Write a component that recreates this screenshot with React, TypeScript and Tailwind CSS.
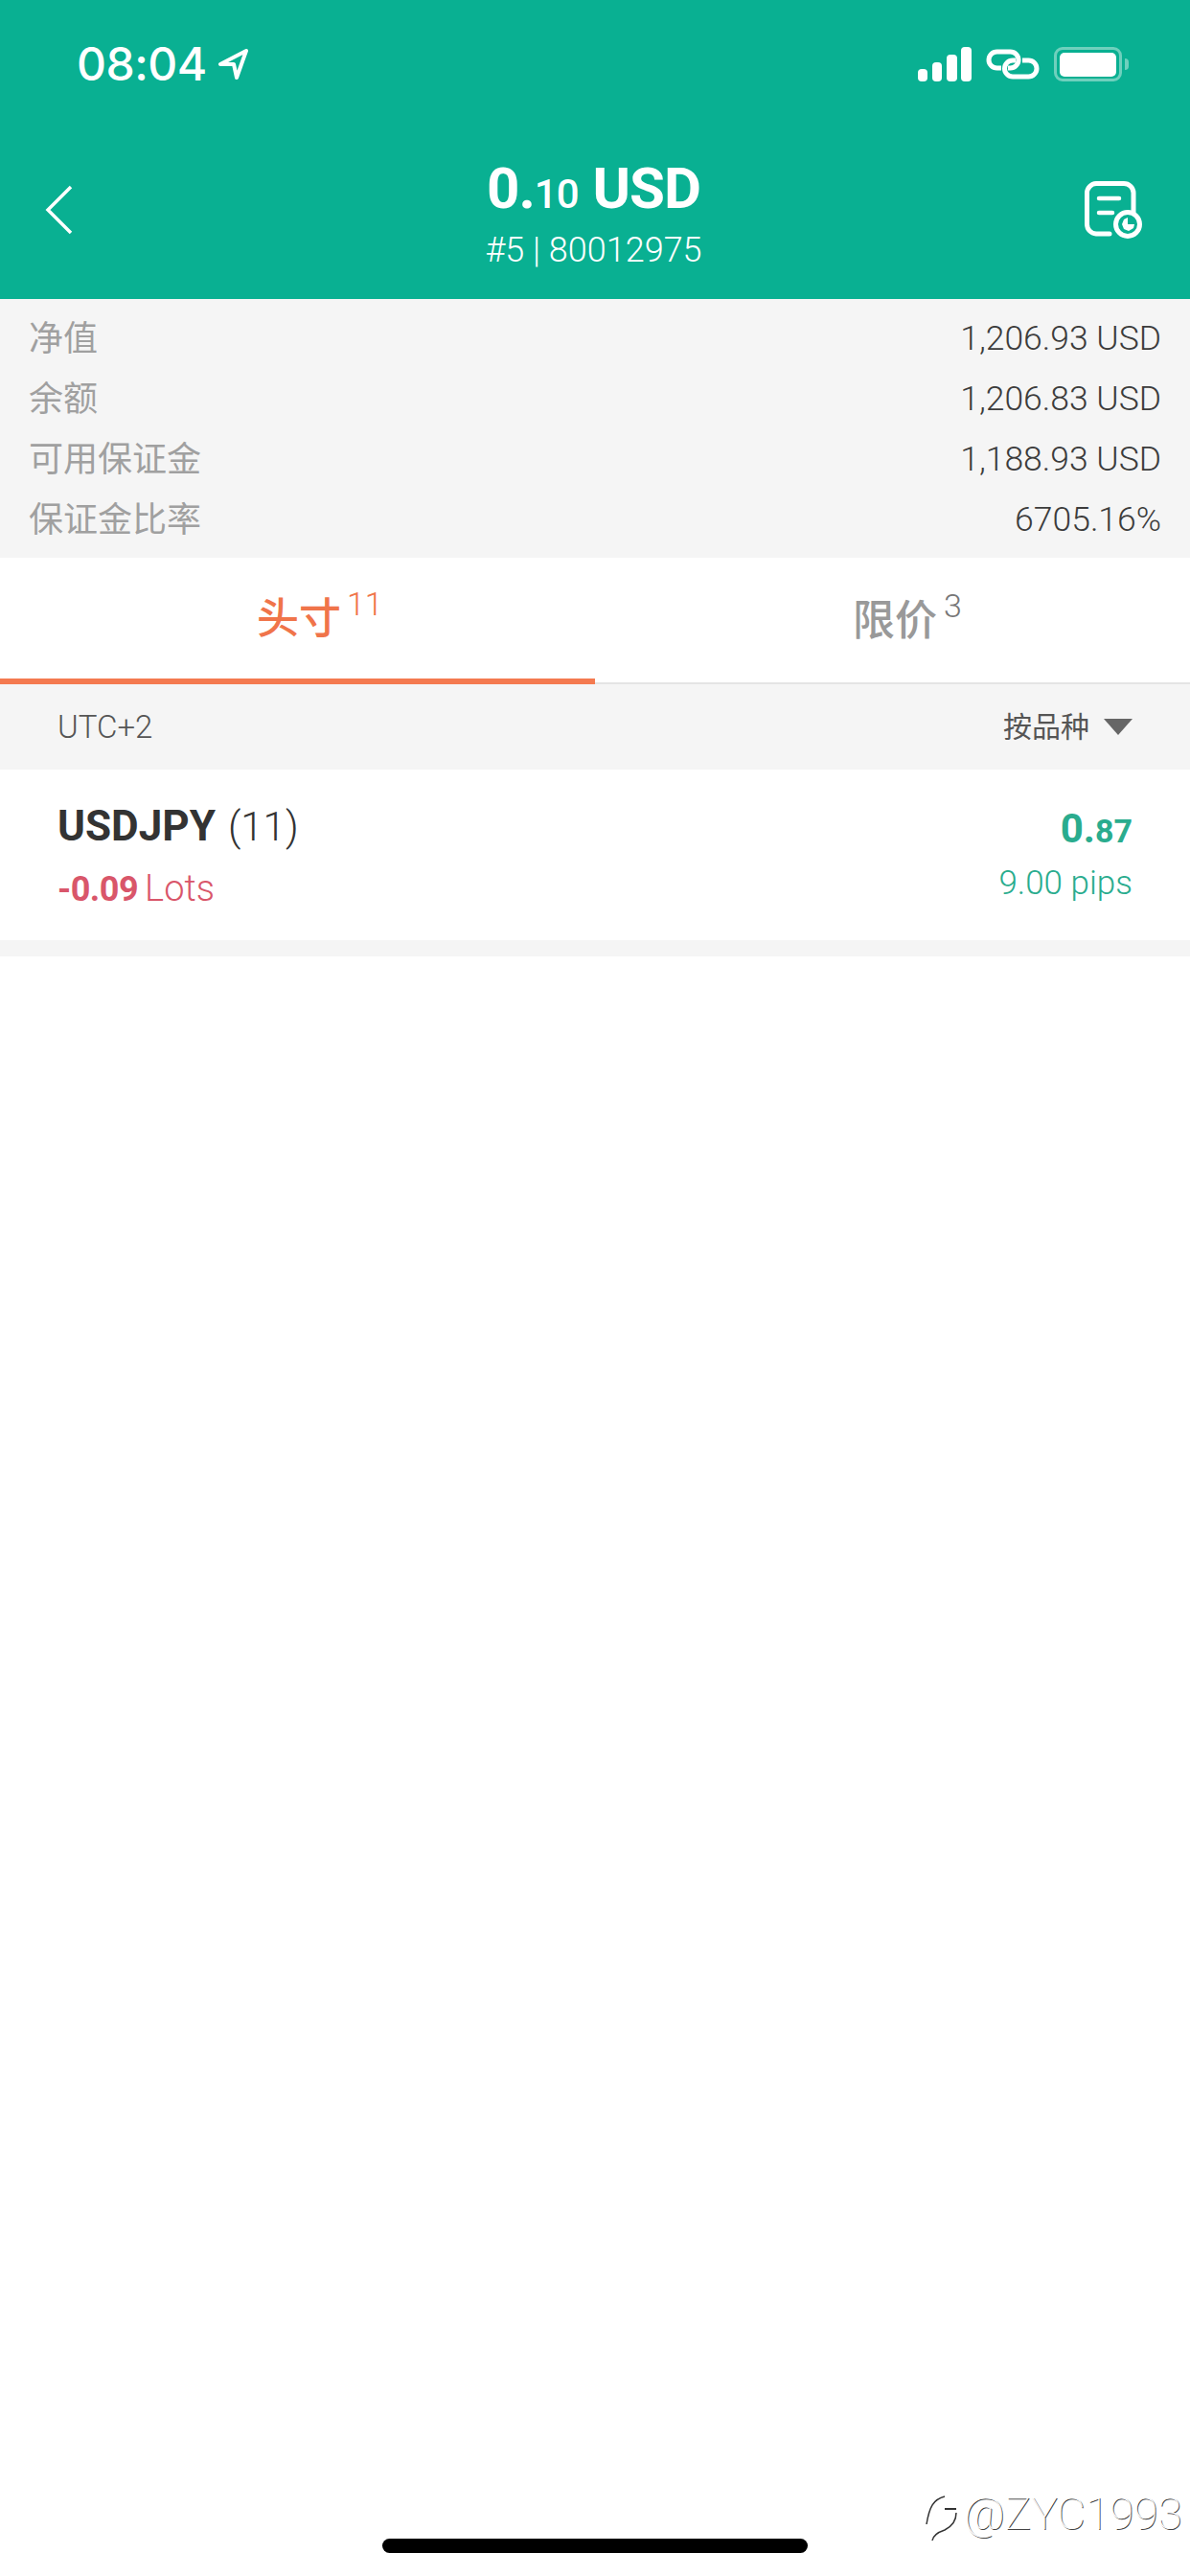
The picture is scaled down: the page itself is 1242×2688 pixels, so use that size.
const din = "font-['Roboto','Noto_Sans_CJK_SC',sans-serif]";

const StatusIcons = () => (
  <div className="flex items-center">
    <svg width="56" height="36" viewBox="0 0 56 36" fill="#fff">
      <rect x="0" y="23" width="10" height="13" rx="4" />
      <rect x="15" y="16" width="10" height="20" rx="4" />
      <rect x="30" y="8" width="11" height="28" rx="4" />
      <rect x="45" y="0" width="11" height="36" rx="4" />
    </svg>
    <svg className="ml-[15px]" width="56" height="32" viewBox="0 0 56 32" fill="none" stroke="#fff" strokeWidth="5">
      <path d="M16 20H11.500A8.500 8.500 0 0 1 11.500 3H25.500A8.500 8.500 0 0 1 25.500 20H23" />
      <path d="M38 12H44.500A8.500 8.500 0 0 1 44.500 29H28A8.500 8.500 0 0 1 28 12H31" />
    </svg>
    <div className="ml-[15px] flex items-center">
      <div className="flex h-[36px] w-[71px] items-center justify-center rounded-[9px] border-[3px] border-[#6fd0bd]">
        <div className="h-[25px] w-[59px] rounded-[5px] bg-white" />
      </div>
      <div className="ml-[3px] h-[12px] w-[4px] rounded-r-full bg-[#6fd0bd]" />
    </div>
  </div>
);

const HistoryIcon = () => (
  <svg className="mb-[6px]" width="60" height="60" viewBox="0 0 60 60" fill="none" stroke="#fff" strokeWidth="5" strokeLinecap="round">
    <path d="M26 55H12A10 10 0 0 1 2.500 45V12A10 10 0 0 1 12 2.500H41A10 10 0 0 1 51 12V32" />
    <path d="M15 18H36M15 33H29" strokeWidth="4.500" />
    <circle cx="45" cy="45" r="12.500" />
    <path d="M45 38V45H52L51 49 46 52 41 50 39 45 41 40Z" fill="#fff" stroke="none" />
  </svg>
);

const rows = [
  ["净值", "1,206.93 USD"],
  ["余额", "1,206.83 USD"],
  ["可用保证金", "1,188.93 USD"],
  ["保证金比率", "6705.16%"],
];

export default function App() {
  return (
    <div className={`relative flex min-h-[2688px] w-[1242px] flex-col bg-white ${din}`}>
      <header className="flex h-[312px] flex-col bg-[#09b092] text-white">
        <div className="flex items-center justify-between pl-[80px] pr-[64px] pt-[49px]">
          <div className="flex items-center">
            <span className="font-['Inter',sans-serif] text-[48px] leading-[36px] font-medium tracking-[-0.5px]">08:04</span>
            <svg className="ml-[11px]" width="33" height="34" viewBox="0 0 33 34" fill="none" stroke="#fff" strokeWidth="4" strokeLinejoin="round">
              <path d="M30 3 3 17H17L20 31Z" />
            </svg>
          </div>
          <StatusIcons />
        </div>
        <div className="mt-[77px] flex items-center justify-between pl-[47px] pr-[50px]">
          <div className="mb-[6px] w-[60px]">
            <svg width="30" height="52" viewBox="0 0 30 52" fill="none" stroke="#fff" strokeWidth="3.500">
              <path d="M27 2 3 26 27 50" />
            </svg>
          </div>
          <div className="flex flex-col items-center">
            <div className="flex items-baseline text-[60px] leading-[70px] font-bold tracking-[-1px]">
              0.<span className="text-[42px] font-medium">10</span>
              <span className="ml-[15px]">USD</span>
            </div>
            <div className="mt-[2px] text-[36px] leading-[42px] font-light">#5 | 80012975</div>
          </div>
          <HistoryIcon />
        </div>
      </header>

      <section className="flex h-[270px] flex-col justify-center bg-[#f5f5f5] pl-[30px] pr-[30px] pt-[3px]">
        {rows.map(([label, value]) => (
          <div key={label} className="flex h-[63px] items-center justify-between">
            <span className="text-[36px] text-[#a0a0a0]">{label}</span>
            <span className="text-[35.5px] font-light text-[#3c3c3c]">{value}</span>
          </div>
        ))}
      </section>

      <nav className="flex h-[132px] border-b-[2px] border-[#e4e4e4]">
        <div className="flex h-[132px] w-[621px] items-center border-b-[6px] border-[#f47a50] pl-[268px] text-[#f0744a]">
          <span className="mt-[2px] text-[44px] font-medium">头寸</span>
          <span className="mb-[30px] ml-[6px] text-[34px] leading-none font-light">11</span>
        </div>
        <div className="flex w-[621px] items-center pl-[269px] text-[#999999]">
          <span className="mt-[2px] text-[44px] font-medium">限价</span>
          <span className="mb-[30px] ml-[7px] text-[34px] leading-none font-light text-[#777777]">3</span>
        </div>
      </nav>

      <div className="flex h-[89px] items-center justify-between bg-[#f5f5f5] pl-[60px] pr-[60px]">
        <span className="text-[33px] font-light text-[#555555]">UTC+2</span>
        <div className="flex items-center">
          <span className="text-[30px] text-[#555555]">按品种</span>
          <span className="ml-[15px] h-0 w-0 border-x-[15px] border-t-[17px] border-x-transparent border-t-[#666666]" />
        </div>
      </div>

      <div className="flex h-[178px] items-start justify-between pl-[60px] pr-[60px] pt-[33px]">
        <div className="flex flex-col">
          <div className="flex items-baseline text-[#333333]">
            <span className="text-[44px] leading-[52px] font-bold">USDJPY</span>
            <span className="ml-[13px] text-[42px] leading-[52px] font-light">(11)</span>
          </div>
          <div className="mt-[18px] flex items-baseline text-[#d9566a]">
            <span className="text-[36px] leading-[40px] font-bold tracking-[-0.5px]">-0.09</span>
            <span className="ml-[7px] text-[38px] leading-[40px] font-light">Lots</span>
          </div>
        </div>
        <div className="flex flex-col items-end pt-[3px] text-[#2aac8e]">
          <div className="flex items-baseline font-bold">
            <span className="text-[42px] leading-[52px]">0.</span>
            <span className="text-[34px] leading-[52px]">87</span>
          </div>
          <span className="mt-[9px] text-[35px] leading-[40px] font-light">9.00 pips</span>
        </div>
      </div>

      <div className="h-[17px] bg-[#f5f5f5]" />

      {/* home indicator and watermark sit over the page */}
      <div className="absolute bottom-[24px] left-[399px] h-[15px] w-[444px] rounded-full bg-black" />
      <div className="absolute left-[962px] top-[2604px] flex items-start text-[46px] leading-[38px] font-thin text-white [text-shadow:1px_1px_0_#444]">
        <svg width="44" height="50" viewBox="0 0 44 50" fill="none" stroke="#333" strokeWidth="1.500">
          <path d="M24 1C12 4 8 12 5 30" />
          <path d="M24 14H36" strokeWidth="2" />
          <path d="M36 18C36 28 30 33 24 36 18 38 12 41 11 47" />
        </svg>
        <span>@ZYC1993</span>
      </div>
    </div>
  );
}
